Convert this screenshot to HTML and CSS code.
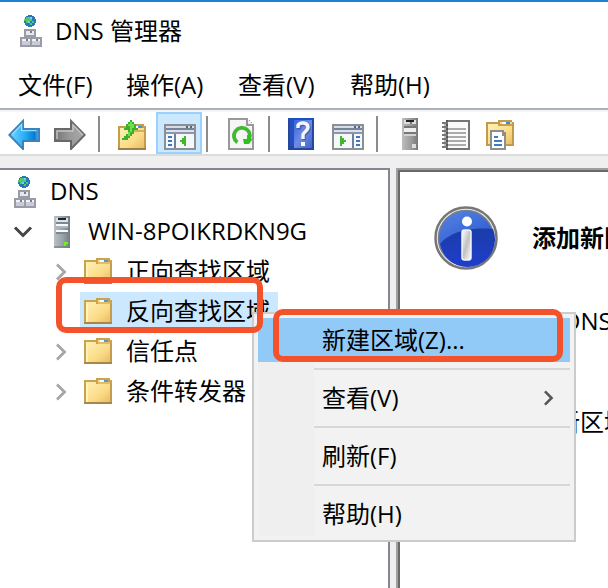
FILE: index.html
```html
<!DOCTYPE html>
<html lang="zh-CN">
<head>
<meta charset="utf-8">
<title>DNS 管理器</title>
<link rel="stylesheet" href="styles.css">
</head>
<body>
<svg class="defs" width="0" height="0" aria-hidden="true">
  <defs>
    <linearGradient id="gold" x1="0" y1="0" x2="1" y2="1"><stop offset="0" stop-color="#fff0b4"/><stop offset=".6" stop-color="#fbdc87"/><stop offset="1" stop-color="#e8bd68"/></linearGradient>
    <linearGradient id="steel" x1="0" y1="0" x2="1" y2="0"><stop offset="0" stop-color="#b9c1c7"/><stop offset=".6" stop-color="#949ea5"/><stop offset="1" stop-color="#717c83"/></linearGradient>
    <linearGradient id="grey" x1="0" y1="0" x2="1" y2="0"><stop offset="0" stop-color="#bdbdbd"/><stop offset=".6" stop-color="#999"/><stop offset="1" stop-color="#777"/></linearGradient>
    <linearGradient id="blue" x1="0" y1="0" x2="1" y2="0"><stop offset="0" stop-color="#77d5ff"/><stop offset=".5" stop-color="#27b1fa"/><stop offset=".85" stop-color="#087bd1"/><stop offset="1" stop-color="#56b4ed"/></linearGradient>
    <linearGradient id="arrowGrey" x1="0" y1="0" x2="1" y2="0"><stop offset="0" stop-color="#747474"/><stop offset=".5" stop-color="#999"/><stop offset="1" stop-color="#aaa"/></linearGradient>
    <linearGradient id="book" x1="0" y1="0" x2="1" y2="1"><stop offset="0" stop-color="#3564dc"/><stop offset=".5" stop-color="#6e8ce5"/><stop offset="1" stop-color="#4264cd"/></linearGradient>
    <linearGradient id="info" x1="0" y1="0" x2=".5" y2="1"><stop offset="0" stop-color="#5687e4"/><stop offset="1" stop-color="#244dc9"/></linearGradient>
    <linearGradient id="infoLow" x1="0" y1="0" x2="0" y2="1"><stop offset="0" stop-color="#1b3da9"/><stop offset="1" stop-color="#1f3dcc"/></linearGradient>
    <linearGradient id="silver" x1="0" y1="0" x2="1" y2="1"><stop offset="0" stop-color="#fff"/><stop offset=".5" stop-color="#c1c1c1"/><stop offset="1" stop-color="#fff"/></linearGradient>

    <symbol id="dns" viewBox="0 0 11 16">
      <circle cx="5" cy="3" r="3" fill="#2877b8"/>
      <path d="M3 1h2v1h1v1H4v1H3V3H2V2h1zM6 3h1v1H6v1H5V4h1z" fill="#55c864"/>
      <path d="M5 1h1v1H5zM4 3h1v1H4z" fill="#6fd2ef"/>
      <path d="M2 7h6v4H2z" fill="#9a9ba3"/><path d="M3 8h4v2H3z" fill="#e6e7f0"/><path d="M5 8h1v1H5z" fill="#777d96"/>
      <path d="M0 11h11v5H0z" fill="#9a9ba3"/><path d="M1 12h4v3H1zM6 12h4v3H6z" fill="#c9cbd8"/><path d="M1 12h4v1H1zM6 12h4v1H6z" fill="#f2f3fa"/><path d="M3 12h1v1H3zM8 12h1v1H8z" fill="#777d96"/>
    </symbol>
    <symbol id="server" viewBox="0 0 8 16">
      <path d="M0 0h8v16H0z" fill="url(#steel)"/><path d="M1 1h6v2H1z" fill="#dce1e4"/><path d="M2 1h4v1H2z" fill="#17272e"/>
      <path d="M1 4h6v1H1zM1 7h6v1H1z" fill="#f7f9fa"/><path d="M1 5h6v1H1z" fill="#aeb6bb"/><path d="M1 3h6v1H1zM1 8h6v1H1z" fill="#7c878e"/>
      <path d="M5 13h2v2H5z" fill="#70f01e"/><path d="M6 14h1v1H6z" fill="#56c312"/><path d="M0 15h8v1H0z" fill="#6e7980" opacity=".6"/>
    </symbol>
    <symbol id="folder" viewBox="0 0 14 13">
      <path d="M0 1h6V0h7v1h1v12H0z" fill="#c9a44d"/>
      <path d="M1 2h5v1h7v9H1z" fill="url(#gold)"/><path d="M7 1h5v1H7z" fill="#f8dc90"/><path d="M8 1h2v1H8z" fill="#fff"/><path d="M10 1h2v1h-2z" fill="#4a9de2"/>
      <path d="M7 2h6v1H7z" fill="#e3be6a"/><path d="M1 3h1v9H1z" fill="#fff2bd"/><path d="M0 12h14v1H0z" fill="#a78649"/><path d="M13 3h1v9h-1z" fill="#c29c51"/>
    </symbol>
    <symbol id="console-frame" viewBox="0 0 16 13">
      <path d="M0 0h16v13H0z" fill="#8a9097"/><path d="M1 1h14v1H1z" fill="#d5dce6"/><path d="M1 2h14v1H1z" fill="#77839a"/><path d="M1 3h14v1H1z" fill="#dce2ec"/><path d="M1 4h14v1H1z" fill="#8b97a9"/><path d="M1 5h14v7H1z" fill="#f6f7f8"/>
      <path d="M11 1h1v1h-1zM13 1h1v1h-1z" fill="#58677f"/>
    </symbol>
    <symbol id="chevron" viewBox="0 0 12 18"><path d="M2 1.5 9.5 9 2 16.500" fill="none" stroke="currentColor" stroke-width="2.800"/></symbol>
  </defs>
</svg>

<div class="window">
  <header class="titlebar">
    <svg class="dns-icon"><use href="#dns"/></svg>
    <h1>DNS 管理器</h1>
  </header>
  <nav class="menubar"><span>文件(F)</span><span>操作(A)</span><span>查看(V)</span><span>帮助(H)</span></nav>

  <div class="toolbar">
    <div class="tool"><svg viewBox="0 0 16 16"><path d="M.7 8.500 7.500 1.500v4h8v6h-8v4z" fill="url(#blue)" stroke="#3c83bd"/><path d="M2 8.300 6.800 3.300v3h7.500" fill="none" stroke="#91dcff" stroke-width=".7"/></svg></div>
    <div class="tool"><svg viewBox="0 0 16 16"><path d="M15.300 8.500 8.500 1.500v4h-8v6h8v4z" fill="url(#arrowGrey)" stroke="#696969"/><path d="M1.500 10.500v-4h8v-3l5 5" fill="none" stroke="#c4c4c4" stroke-width=".7"/></svg></div>
    <i class="divider divider-a"></i>
    <div class="tool"><svg class="pixel" viewBox="0 0 16 16">
      <path d="M0 4h7V3h6v1h1v12H0z" fill="#c49d4c"/><path d="M1 5h12v10H1z" fill="url(#gold)"/><path d="M8 4h4v1H8z" fill="#fff"/><path d="M10 4h2v1h-2z" fill="#3d91df"/><path d="M8 6h5v1H8z" fill="#d9ae58"/><path d="M0 15h14v1H0z" fill="#9d8049"/>
      <path d="M6 1h1v1h1v1h1v2h1v1H8v2H7v1H6v1H5v1H2v-1h1V9h1V8h1V6H3V5h1V3h1V2h1z" fill="#3fae2f"/><path d="M6 2h1v1h1v2H7v2H6v2H5V7h1V4H5V3h1z" fill="#6ee04d"/></svg></div>
    <div class="tool active"><svg class="pixel" viewBox="0 0 16 16"><use href="#console-frame" y="3" width="16" height="13"/><path d="M5 8h1v7H5z" fill="#6e7f9b"/><path d="M2 9h2v1H2zM2 11h2v1H2zM2 13h2v1H2z" fill="#3a78c4"/><path d="M8 11h1v-1h1V9h1v5h-1v-1H9v-1H8z" fill="#43b72b"/></svg></div>
    <i class="divider divider-b"></i>
    <div class="tool"><svg viewBox="0 0 16 16"><path class="pixel" d="M1 0h10v1h1v1h1v1h1v13H1z" fill="#999"/><path class="pixel" d="M2 1h8v3h3v11H2z" fill="#f6f6f6"/><path class="pixel" d="M11 1v2h2" fill="#eee"/><path d="M5.700 12.200A4 4 0 1 1 11 11.500" fill="none" stroke="#42b934" stroke-width="1.900"/><path d="M8.500 10.500h2v-2h1.800v2h1L11.500 13H9z" fill="#28c51d"/></svg></div>
    <i class="divider divider-c"></i>
    <div class="tool"><svg viewBox="0 0 16 16"><path class="pixel" d="M1 0h13v16H1z" fill="#27479e"/><path class="pixel" d="M2 1h2v13H2z" fill="#284fbf"/><path class="pixel" d="M4 1h9v14H4z" fill="url(#book)"/><path class="pixel" d="M1 0h13v1H1z" fill="#1b50c5"/><path d="M6 5.200V3.600C7 2.100 10.600 2 11 4.300c.3 2.200-2.500 2.700-2.500 4.200v2" fill="none" stroke="#384b8e" stroke-width="1.900" transform="translate(.5 .5)" opacity=".6"/><path d="M6 5V3.600C7 2.100 10.600 2 11 4.300c.3 2.200-2.500 2.700-2.500 4.200v2" fill="none" stroke="#f5f6ff" stroke-width="1.700"/><path d="M7.500 12h2v2h-2z" fill="#fff"/></svg></div>
    <div class="tool"><svg class="pixel" viewBox="0 0 16 16"><use href="#console-frame" y="3" width="16" height="13"/><path d="M10 8h1v7h-1z" fill="#6e7f9b"/><path d="M12 9h2v1h-2zM12 11h2v1h-2zM12 13h2v1h-2z" fill="#3a78c4"/><path d="M4 9h1v1h1v1h1v1H6v1H5v1H4z" fill="#43b72b"/></svg></div>
    <i class="divider divider-d"></i>
    <div class="tool"><svg class="pixel" viewBox="0 0 16 16"><path d="M4 0h8v16H4z" fill="url(#grey)"/><path d="M5 1h6v2H5z" fill="#ddd"/><path d="M6 1h4v1H6z" fill="#222"/><path d="M8 2h1v1H8z" fill="#777"/><path d="M5 5h6v2H5z" fill="#eee"/><path d="M5 4h6v1H5zM5 7h6v1H5z" fill="#777"/><path d="M5 8h6v1H5z" fill="#d3d3d3"/><path d="M9 13h2v2H9z" fill="#ddd"/></svg></div>
    <div class="tool"><svg class="pixel" viewBox="0 0 16 16"><path d="M3 1h12v15H3z" fill="#757575"/><path d="M4 2h10v13H4z" fill="#fafafa"/><path d="M4 5h9v1H4zM4 7h9v1H4zM4 9h9v1H4zM4 11h9v1H4zM4 13h9v1H4z" fill="#aaa"/><path d="M3 1h1v15H3z" fill="#555"/><path d="M1 2h3v1H1zM1 4h3v1H1zM1 6h3v1H1zM1 8h3v1H1zM1 10h3v1H1zM1 12h3v1H1zM1 14h3v1H1z" fill="#777"/><path d="M2 3h1v1H2zM2 5h1v1H2zM2 7h1v1H2zM2 9h1v1H2zM2 11h1v1H2zM2 13h1v1H2z" fill="#bbb"/></svg></div>
    <div class="tool"><svg class="pixel" viewBox="0 0 16 16"><path d="M0 2h6V1h7v1h1v12H0z" fill="#c09b4d"/><path d="M1 3h5v1h7v9H1z" fill="url(#gold)"/><path d="M7 2h6v1H7z" fill="#f7d886"/><path d="M8 2h2v1H8z" fill="#fff"/><path d="M10 2h2v1h-2z" fill="#318de0"/><path d="M6 3h7v1H6z" fill="#c79f52"/><path d="M2 6h7v1h1v9H2z" fill="#8e8e8e"/><path d="M3 7h5v2h1v6H3z" fill="#fff"/><path d="M4 9h2v1H4zM4 11h4v1H4zM4 13h4v1H4z" fill="#3e7fc4"/></svg></div>
  </div>

  <main class="workspace">
    <section class="tree">
      <div class="row root"><svg class="dns-icon"><use href="#dns"/></svg><span>DNS</span></div>
      <div class="row host"><svg class="expanded" viewBox="0 0 20 14"><path d="M2 2.500 10 10.500 18 2.500" fill="none" stroke="#444" stroke-width="3"/></svg><svg class="server-icon"><use href="#server"/></svg><span>WIN-8POIKRDKN9G</span></div>
      <div class="row zone"><svg class="chevron"><use href="#chevron"/></svg><div class="node"><svg class="folder-icon pixel"><use href="#folder"/></svg><span>正向查找区域</span></div></div>
      <div class="row zone"><span class="chevron"></span><div class="node selected"><svg class="folder-icon pixel"><use href="#folder"/></svg><span>反向查找区域</span></div></div>
      <div class="row zone"><svg class="chevron"><use href="#chevron"/></svg><div class="node"><svg class="folder-icon pixel"><use href="#folder"/></svg><span>信任点</span></div></div>
      <div class="row zone"><svg class="chevron"><use href="#chevron"/></svg><div class="node"><svg class="folder-icon pixel"><use href="#folder"/></svg><span>条件转发器</span></div></div>
    </section>
    <section class="details">
      <div class="intro">
        <svg class="info-icon" viewBox="0 0 64 64"><circle cx="32" cy="32" r="30.500" fill="#eee" stroke="#777" stroke-width="2.500"/><circle cx="32" cy="32" r="27.500" fill="url(#info)" stroke="#777c8a" stroke-width="1.500"/><path d="M6 38C16 26 35 21 59 23a27 27 0 0 1-51 21z" fill="url(#infoLow)"/><circle cx="33" cy="15.500" r="5" fill="#fff"/><rect x="28" y="24" width="9" height="30" rx="2.500" fill="url(#silver)" stroke="#f0f3fa" stroke-width="1.500"/></svg>
        <h2>添加新区域</h2>
      </div>
      <p class="domain">DNS</p>
      <p class="new-zone">新区域</p>
    </section>
  </main>
</div>

<div class="context-menu">
  <div class="item highlighted">新建区域(Z)...</div>
  <hr>
  <div class="item">查看(V)<svg class="submenu"><use href="#chevron"/></svg></div>
  <hr>
  <div class="item">刷新(F)</div>
  <hr>
  <div class="item">帮助(H)</div>
</div>
<div class="callout callout-zone"></div>
<div class="callout callout-new"></div>
</body>
</html>
```
FILE: styles.css
```css
* { box-sizing: border-box; }
body {
  margin: 0;
  width: 608px;
  height: 588px;
  overflow: hidden;
  position: relative;
  background: #fff;
  color: #000;
  font: 24px/40px "Open Sans", "Noto Sans CJK SC", sans-serif;
  white-space: nowrap;
}
svg { display: block; flex: none; }
.defs { position: absolute; }
.pixel { shape-rendering: crispEdges; }
.window { height: 588px; display: flex; flex-direction: column; border-top: 2px solid #1883d7; }
.titlebar { height: 58px; display: flex; align-items: center; padding-left: 20px; gap: 13px; }
.titlebar h1 { margin: 0; font: inherit; }
.dns-icon { width: 22px; height: 32px; shape-rendering: crispEdges; }
.menubar { height: 50px; display: grid; grid-template-columns: 108px 112px 112px 112px; padding: 5px 0 0 18px; border-bottom: 2px solid #b0b0b0; }
.menubar { height: 50px; }

.toolbar { height: 46px; display: flex; border-top: 2px solid #f0f6fb; border-bottom: 2px solid #dcdcdc; }
.tool { width: 46px; height: 42px; flex: none; padding: 6px 0 0 8px; }
.tool svg { width: 32px; height: 32px; }
.tool.active { padding: 4px 0 0 6px; background: #cce8ff; border: 2px solid #99d1ff; }
.divider { width: 2px; height: 36px; margin-top: 4px; flex: none; background: #8c8c8c; }
.divider-a { margin-left: 6px; margin-right: 10px; }
.divider-b { margin-left: 4px; margin-right: 10px; }
.divider-c { margin-left: 4px; margin-right: 8px; }
.divider-d { margin-left: 6px; margin-right: 8px; }

.workspace { flex: 1; display: flex; gap: 6px; padding-top: 12px; background: #efefef; }
.tree { width: 390px; flex: none; padding-top: 2px; background: #fff; border: solid #828790; border-width: 2px 2px 0 0; }
.row { height: 40px; display: flex; align-items: center; }
.row span { position: relative; top: -1px; }
.root { padding-left: 14px; gap: 14px; }
.host { padding-left: 13px; }
.expanded { width: 20px; height: 14px; margin-right: 21px; }
.server-icon { width: 16px; height: 32px; margin-right: 18px; shape-rendering: crispEdges; }
.zone { padding-left: 55px; }
.chevron { width: 12px; height: 18px; margin-right: 13px; color: #a6a6a6; }
.node { height: 40px; display: flex; align-items: center; gap: 14px; padding: 0 8px 0 4px; }
.node.selected { background: #cce8ff; }
.folder-icon { width: 28px; height: 26px; margin-top: -2px; }

.details { flex: 1; overflow: hidden; background: #fff; border: solid #a0a0a0; border-width: 2px 0 0 2px; box-shadow: inset 2px 2px #696969; }
.intro { display: flex; align-items: center; gap: 34px; padding: 36px 0 0 36px; }
.info-icon { width: 64px; height: 64px; }
.intro h2 { margin: 0; font-size: 24px; font-weight: 700; }
.details p { margin: 0; }
.domain { padding: 31px 0 0 165px; }
.new-zone { padding: 61px 0 0 158px; }

.context-menu { position: absolute; left: 252px; top: 312px; width: 324px; height: 230px; padding: 4px; border: 2px solid #ccc; background: linear-gradient(#efefef, #efefef) 4px 4px / 56px 218px no-repeat #f2f2f2; }
.item { height: 44px; display: flex; align-items: center; justify-content: space-between; padding: 0 16px 0 64px; }
.highlighted { background: #91c9f7; }
.context-menu hr { height: 2px; margin: 6px 0 6px 56px; border: 0; background: #d7d7d7; }
.submenu { width: 11px; height: 16px; color: #555; }

.callout { position: absolute; border: 6px solid #f4522a; border-radius: 10px; }
.callout-zone { left: 56px; top: 277px; width: 207px; height: 56px; }
.callout-new { left: 273px; top: 309px; width: 290px; height: 53px; }
```
